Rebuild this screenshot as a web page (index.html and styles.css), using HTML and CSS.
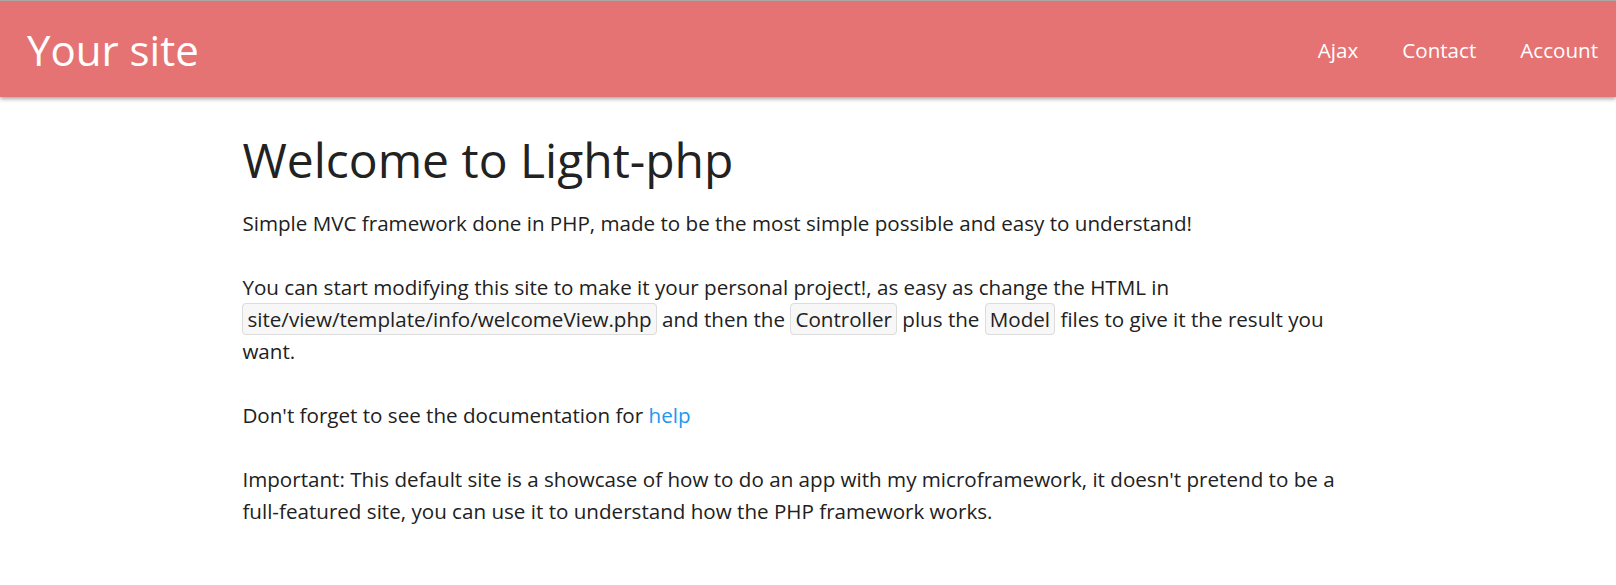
FILE: index.html
```html
<!DOCTYPE html>
<html lang="en">
<head>
<meta charset="utf-8">
<title>Your site</title>
<link rel="stylesheet" href="styles.css">
</head>
<body>
<header class="topbar">
  <a class="brand" href="#">Your site</a>
  <nav class="nav">
    <a href="#">Ajax</a>
    <a href="#">Contact</a>
    <a href="#">Account</a>
  </nav>
</header>
<main class="content">
  <h1 class="title">Welcome to Light-php</h1>
  <p>Simple MVC framework done in PHP, made to be the most simple possible and easy to understand!</p>
  <p>You can start modifying this site to make it your personal project!, as easy as change the HTML in <span class="code">site/view/template/info/welcomeView.php</span> and then the <span class="code">Controller</span> plus the <span class="code">Model</span> files to give it the result you want.</p>
  <p>Don't forget to see the documentation for <a class="link" href="#">help</a></p>
  <p>Important: This default site is a showcase of how to do an app with my microframework, it doesn't pretend to be a <span class="nowrap">full-featured</span> site, you can use it to understand how the PHP framework works.</p>
</main>
</body>
</html>
```
FILE: styles.css
```css
html, body {
  margin: 0;
  padding: 0;
  background: #ffffff;
}
body {
  font-family: "Open Sans", "Noto Sans", sans-serif;
  color: #212121;
}
.topbar {
  display: flex;
  align-items: center;
  justify-content: space-between;
  height: 96px;
  border-top: 1px solid #a8a8a8;
  background: #e57373;
  box-shadow: 0 2px 4px rgba(0, 0, 0, 0.35);
  padding: 0 18px 0 27px;
}
.brand {
  color: #ffffff;
  text-decoration: none;
  font-size: 42px;
  line-height: 1;
  margin-top: 2px;
}
.nav {
  display: flex;
  gap: 44px;
  margin-top: 2px;
}
.nav a {
  color: #ffffff;
  text-decoration: none;
  font-size: 20.6px;
}
.content {
  box-sizing: border-box;
  width: 70%;
  margin: 0 auto;
  padding: 30px 22px 0 0;
  font-size: 20.6px;
  line-height: 32px;
}
.title {
  font-size: 48px;
  font-weight: 400;
  line-height: 66px;
  margin: 0 0 14px;
  color: #222;
}
.content p {
  margin: 0 0 32px;
}
.nowrap {
  white-space: nowrap;
}
.code {
  background: #f7f7f7;
  border: 1px solid #dcdcdc;
  border-radius: 4px;
  padding: 1px 4px;
}
.link {
  color: #2196f3;
  text-decoration: none;
}
```
